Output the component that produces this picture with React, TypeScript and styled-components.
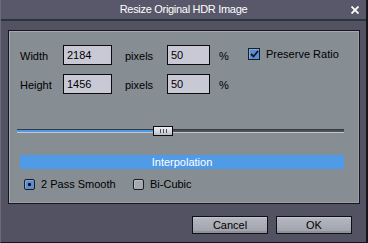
import React from "react";
import styled, { createGlobalStyle } from "styled-components";

const Global = createGlobalStyle`
  html, body { margin: 0; padding: 0; background: #525262; }
  body { font-family: "Liberation Sans", Arial, sans-serif; font-size: 11px; }
  * { box-sizing: border-box; }
`;

const Window = styled.div`
  width: 368px;
  height: 243px;
  background: #525262;
  border-left: 1px solid #6a6a7a;
  border-right: 2px solid #15151c;
  border-bottom: 1px solid #15151c;
  display: flex;
  flex-direction: column;
  overflow: hidden;
`;

const TitleBar = styled.div`
  height: 21px;
  flex: none;
  background: #58586a;
  border-bottom: 2px solid #2a353b;
  position: relative;
  display: flex;
  align-items: center;
  justify-content: center;
  color: #ffffff;
  font-size: 11px;
  letter-spacing: -0.3px;
  padding-bottom: 1px;
`;

const Close = styled.svg`
  position: absolute;
  right: 7px;
  top: 6px;
`;

const Body = styled.div`
  padding: 9px 0 0 7px;
  display: flex;
  flex-direction: column;
`;

const Panel = styled.div`
  width: 352px;
  height: 174px;
  background: #868d93;
  border: 1px solid #16161c;
  box-shadow: inset 1px 1px 0 #a3a9ae, inset -1px -1px 0 #9aa0a6;
  padding: 14px 15px 0 11px;
  display: flex;
  flex-direction: column;
`;

const Grid = styled.div`
  display: grid;
  grid-template-columns: 43px 62px 42px 52px 29px 1fr;
  grid-auto-rows: 20px;
  row-gap: 9px;
  align-items: center;
  color: #000;
`;

const Label = styled.span`
  line-height: 20px;
  padding-top: 1px;
  white-space: nowrap;
`;

const Field = styled.div<{ $w: number }>`
  width: ${(p) => p.$w}px;
  height: 20px;
  background: #c9c9d6;
  border: 1px solid #0c0c10;
  padding: 2px 0 0 3px;
  font-size: 11px;
  line-height: 14px;
  color: #000;
`;

const CheckWrap = styled.label`
  display: flex;
  align-items: center;
  gap: 6px;
  font-size: 11px;
  white-space: nowrap;
  align-self: start;
  margin-top: 3px;
`;

const Box = styled.span<{ $on?: boolean; $round?: boolean }>`
  width: ${(p) => (p.$round ? 11 : 12)}px;
  height: ${(p) => (p.$round ? 11 : 12)}px;
  flex: none;
  border: 1px solid #1a1d26;
  border-radius: ${(p) => (p.$round ? 2 : 0)}px;
  background: ${(p) => (p.$on ? "#5a8ed0" : "#a6a9b3")};
  box-shadow: inset 1px 1px 0 rgba(255, 255, 255, 0.25);
  display: flex;
  align-items: center;
  justify-content: center;
`;

const Dot = styled.span`
  width: 3px;
  height: 3px;
  background: #0a0a10;
  border-radius: 1px;
`;

const Slider = styled.div`
  margin: 32px 0 0 -3px;
  height: 10px;
  position: relative;
  display: flex;
  align-items: center;
`;

const TrackFill = styled.div<{ $pct: number }>`
  height: 4px;
  width: 100%;
  border-top: 1px solid #343a44;
  border-bottom: 1px solid #c4c8ce;
  background: linear-gradient(
    to right,
    #4e9ae6 0%,
    #4e9ae6 ${(p) => p.$pct}%,
    #4c525a ${(p) => p.$pct}%,
    #4c525a 100%
  );
`;

const Thumb = styled.div`
  position: absolute;
  top: 0;
  width: 20px;
  height: 10px;
  border: 1px solid #0c0c12;
  background: linear-gradient(#eceef2, #d4d6de 60%, #b8bac4);
  display: flex;
  align-items: center;
  justify-content: center;
  gap: 2px;
`;

const Grip = styled.span`
  width: 1px;
  height: 4px;
  background: #4a4c58;
`;

const SectionBar = styled.div`
  margin-top: 19px;
  height: 14px;
  background: #4f9be8;
  color: #ffffff;
  font-size: 11px;
  line-height: 14px;
  text-align: center;
`;

const RadioRow = styled.div`
  margin-top: 9px;
  display: flex;
  align-items: center;
  padding-left: 4px;
`;

const Option = styled.label<{ $w?: number }>`
  display: flex;
  align-items: center;
  gap: 6px;
  font-size: 11px;
  white-space: nowrap;
  width: ${(p) => (p.$w ? `${p.$w}px` : "auto")};
  color: #000;
`;

const ButtonRow = styled.div`
  margin-top: 12px;
  display: flex;
  justify-content: flex-end;
  gap: 8px;
  padding-right: 14px;
`;

const Button = styled.button`
  width: 76px;
  height: 18px;
  padding: 0;
  border: 1px solid #101016;
  background: linear-gradient(#c4c7ce 0px, #b2b5bd 2px, #a8abb3 60%, #9da0a8 100%);
  box-shadow: inset 0 -2px 0 #8e919a;
  font-family: "Liberation Sans", Arial, sans-serif;
  font-size: 11px;
  line-height: 16px;
  color: #000;
`;

export default function App() {
  const pct = 41.7;
  return (
    <>
      <Global />
      <Window>
        <TitleBar>
          Resize Original HDR Image
          <Close width="8" height="8" viewBox="0 0 8 8">
            <path d="M0.5 0.5 L7.5 7.5 M7.5 0.5 L0.5 7.5" stroke="#fff" strokeWidth="1.8" />
          </Close>
        </TitleBar>
        <Body>
          <Panel>
            <Grid>
              <Label>Width</Label>
              <Field $w={49}>2184</Field>
              <Label>pixels</Label>
              <Field $w={43}>50</Field>
              <Label>%</Label>
              <CheckWrap>
                <Box $on>
                  <svg width="9" height="8" viewBox="0 0 9 8">
                    <path d="M1 4 L3.5 6.5 L8 1" stroke="#0e1530" strokeWidth="1.8" fill="none" />
                  </svg>
                </Box>
                Preserve Ratio
              </CheckWrap>
              <Label>Height</Label>
              <Field $w={49}>1456</Field>
              <Label>pixels</Label>
              <Field $w={43}>50</Field>
              <Label>%</Label>
              <span />
            </Grid>
            <Slider>
              <TrackFill $pct={pct} />
              <Thumb style={{ left: `${pct}%` }}>
                <Grip />
                <Grip />
                <Grip />
              </Thumb>
            </Slider>
            <SectionBar>Interpolation</SectionBar>
            <RadioRow>
              <Option $w={109}>
                <Box $on $round>
                  <Dot />
                </Box>
                2 Pass Smooth
              </Option>
              <Option>
                <Box $round />
                Bi-Cubic
              </Option>
            </RadioRow>
          </Panel>
          <ButtonRow>
            <Button>Cancel</Button>
            <Button>OK</Button>
          </ButtonRow>
        </Body>
      </Window>
    </>
  );
}
